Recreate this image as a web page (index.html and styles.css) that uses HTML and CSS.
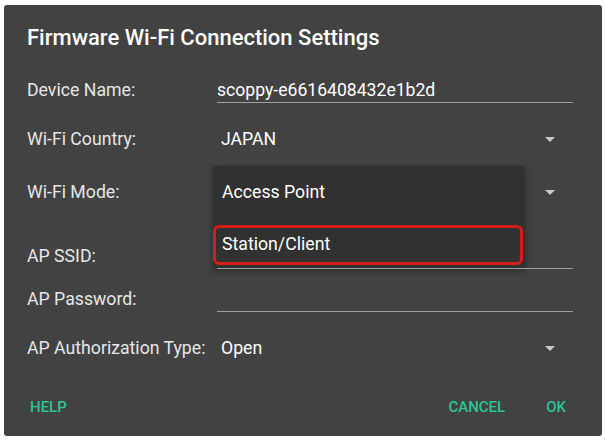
FILE: index.html
```html
<!DOCTYPE html>
<html>
<head>
<meta charset="utf-8">
<link rel="stylesheet" href="styles.css">
</head>
<body>
<div class="dialog">
  <h1 class="title">Firmware Wi-Fi Connection Settings</h1>
  <div class="row r1">
    <div class="label">Device Name:</div>
    <div class="field text"><span class="value small">scoppy-e6616408432e1b2d</span></div>
  </div>
  <div class="row r2">
    <div class="label">Wi-Fi Country:</div>
    <div class="field spinner"><span class="value">JAPAN</span><span class="arrow"></span></div>
  </div>
  <div class="row r3">
    <div class="label">Wi-Fi Mode:</div>
    <div class="field spinner"><span class="value">Access Point</span><span class="arrow"></span></div>
    <div class="menu">
      <div class="item">Access Point</div>
      <div class="item selected">Station/Client</div>
    </div>
  </div>
  <div class="row r4">
    <div class="label">AP SSID:</div>
    <div class="field text"><span class="value small">&nbsp;</span></div>
  </div>
  <div class="row r5">
    <div class="label">AP Password:</div>
    <div class="field text"><span class="value small">&nbsp;</span></div>
  </div>
  <div class="row r6">
    <div class="label">AP Authorization Type:</div>
    <div class="field spinner"><span class="value">Open</span><span class="arrow"></span></div>
  </div>
  <div class="actions">
    <button class="btn help">HELP</button>
    <div class="spacer"></div>
    <button class="btn">CANCEL</button>
    <button class="btn ok">OK</button>
  </div>
</div>
</body>
</html>
```
FILE: styles.css
```css
html, body {
  margin: 0;
  padding: 0;
  background: #ffffff;
}
body {
  font-family: Roboto, "Liberation Sans", sans-serif;
  padding: 5px 4px 4px 4px;
}
.dialog {
  position: relative;
  width: 598px;
  height: 431px;
  background: #424242;
  border-radius: 3px;
  box-sizing: border-box;
  padding: 20px 29px 0 23px;
  display: flex;
  flex-direction: column;
}
.title {
  margin: 0;
  font-size: 22px;
  line-height: 26px;
  font-weight: 500;
  color: #ffffff;
}
.row {
  position: relative;
  height: 40px;
  display: flex;
  align-items: center;
}
.r1 { margin-top: 19px; }
.r2 { margin-top: 9px; }
.r3 { margin-top: 13px; }
.r4 { margin-top: 24px; }
.r5 { margin-top: 3px; }
.r6 { margin-top: 9px; }
.label {
  width: 190px;
  flex: none;
  font-size: 17.7px;
  color: #e6e6e6;
}
.field {
  flex: 1;
  display: flex;
  align-items: center;
}
.value {
  font-size: 17.7px;
  color: #ffffff;
  line-height: 20px;
}
.value.small {
  font-size: 17.6px;
}
.text {
  padding-top: 3px;
  padding-bottom: 2px;
  border-bottom: 1.5px solid #a0a0a0;
}
.spinner {
  padding-left: 4px;
  padding-right: 18px;
  justify-content: space-between;
}
.arrow {
  width: 0;
  height: 0;
  border-left: 5px solid transparent;
  border-right: 5px solid transparent;
  border-top: 5px solid #c8c8c8;
}
.menu {
  position: absolute;
  left: 186px;
  top: -6px;
  width: 312px;
  height: 103px;
  background: #313131;
  box-shadow: 0 2px 6px rgba(0,0,0,0.35);
  border-radius: 2px;
  padding-top: 5px;
  box-sizing: border-box;
}
.item {
  height: 42px;
  box-sizing: border-box;
  display: flex;
  align-items: center;
  padding-left: 9px;
  font-size: 17.7px;
  color: #ffffff;
}
.item.selected {
  margin-top: 12px;
  height: 40px;
  width: 310px;
  border: 3px solid #d41e1e;
  border-radius: 6px;
  padding-left: 6px;
  padding-bottom: 2px;
}
.actions {
  margin-top: auto;
  height: 52px;
  display: flex;
  align-items: center;
  box-sizing: border-box;
  margin-bottom: 3px;
  margin-right: -22px;
}
.spacer { flex: 1; }
.btn {
  background: none;
  border: none;
  padding: 0;
  font-family: Roboto, "Liberation Sans", sans-serif;
  font-weight: 500;
  font-size: 15px;
  color: #2bc596;
  line-height: 20px;
  cursor: pointer;
}
.help { margin-left: 3px; }
.ok { margin-left: 41px; margin-right: 29px; }
```
